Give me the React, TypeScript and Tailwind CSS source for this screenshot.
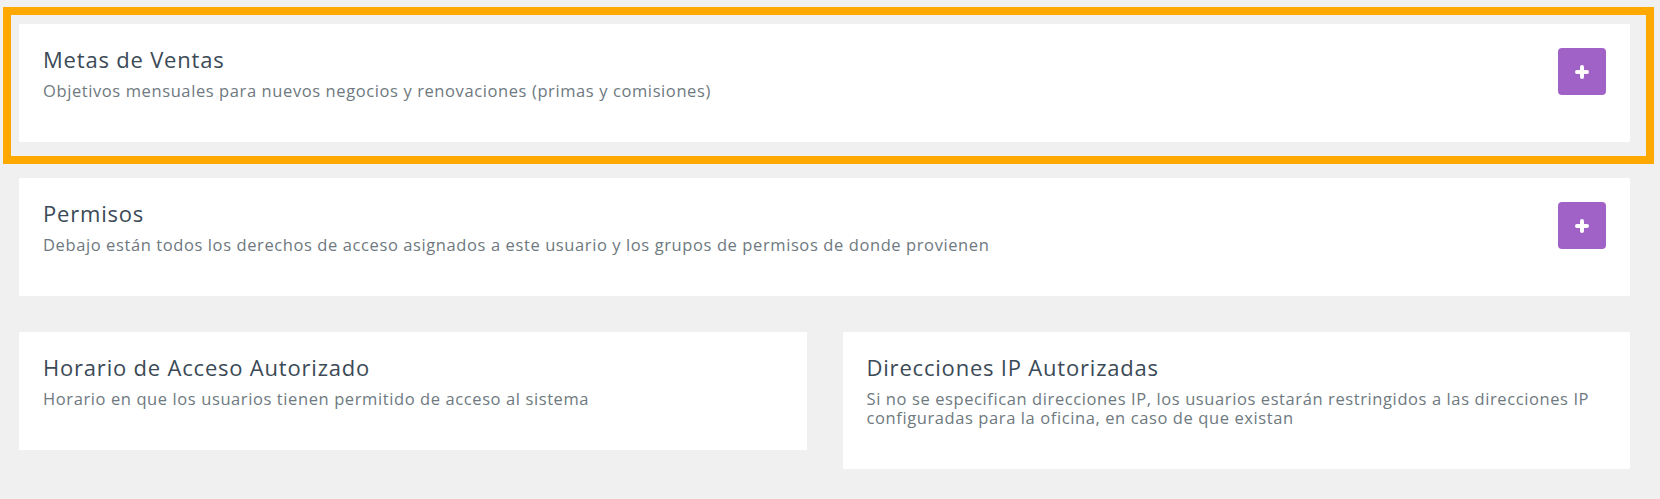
import React from "react";

type Section = {
  title: string;
  description: string;
  addable?: boolean;
};

const stacked: Section[] = [
  {
    title: "Metas de Ventas",
    description:
      "Objetivos mensuales para nuevos negocios y renovaciones (primas y comisiones)",
    addable: true,
  },
  {
    title: "Permisos",
    description:
      "Debajo están todos los derechos de acceso asignados a este usuario y los grupos de permisos de donde provienen",
    addable: true,
  },
];

const paired: Section[] = [
  {
    title: "Horario de Acceso Autorizado",
    description: "Horario en que los usuarios tienen permitido de acceso al sistema",
  },
  {
    title: "Direcciones IP Autorizadas",
    description:
      "Si no se especifican direcciones IP, los usuarios estarán restringidos a las direcciones IP configuradas para la oficina, en caso de que existan",
  },
];

function PlusIcon() {
  return (
    <svg width="18" height="18" viewBox="0 0 18 18" fill="none">
      <path
        d="M9 4v10M4 9h10"
        stroke="white"
        strokeWidth="4"
        strokeLinecap="round"
      />
    </svg>
  );
}

function SectionCard({ section }: { section: Section }) {
  return (
    <div className="bg-white flex items-start justify-between gap-6 px-6 pt-6 pb-[42px]">
      <div>
        <h2 className="text-[22px] leading-[22px] font-medium text-[#3b4a56] tracking-[0.8px]">
          {section.title}
        </h2>
        <p className="mt-[11px] text-[16.5px] leading-[19px] text-[#6e7980] tracking-[0.6px]">
          {section.description}
        </p>
      </div>
      {section.addable && (
        <button className="shrink-0 w-12 h-[47px] rounded-[4px] bg-[#a062c6] flex items-center justify-center">
          <PlusIcon />
        </button>
      )}
    </div>
  );
}

export default function App() {
  return (
    <div
      className="min-h-screen bg-[#f0f0f0] pt-6 pl-[19px] pr-[30px] pb-6"
      style={{ fontFamily: '"Open Sans", "Liberation Sans", sans-serif' }}
    >
      <div className="flex flex-col gap-9">
        {stacked.map((section, index) => (
          <div key={index} className="relative">
            <SectionCard section={section} />
            {index === 0 && (
              <div className="absolute -left-4 -top-[17px] -right-6 -bottom-[22px] border-8 border-[#ffa800] pointer-events-none" />
            )}
          </div>
        ))}
        <div className="grid grid-cols-2 gap-9 items-start">
          {paired.map((section, index) => (
            <SectionCard key={index} section={section} />
          ))}
        </div>
      </div>
    </div>
  );
}
